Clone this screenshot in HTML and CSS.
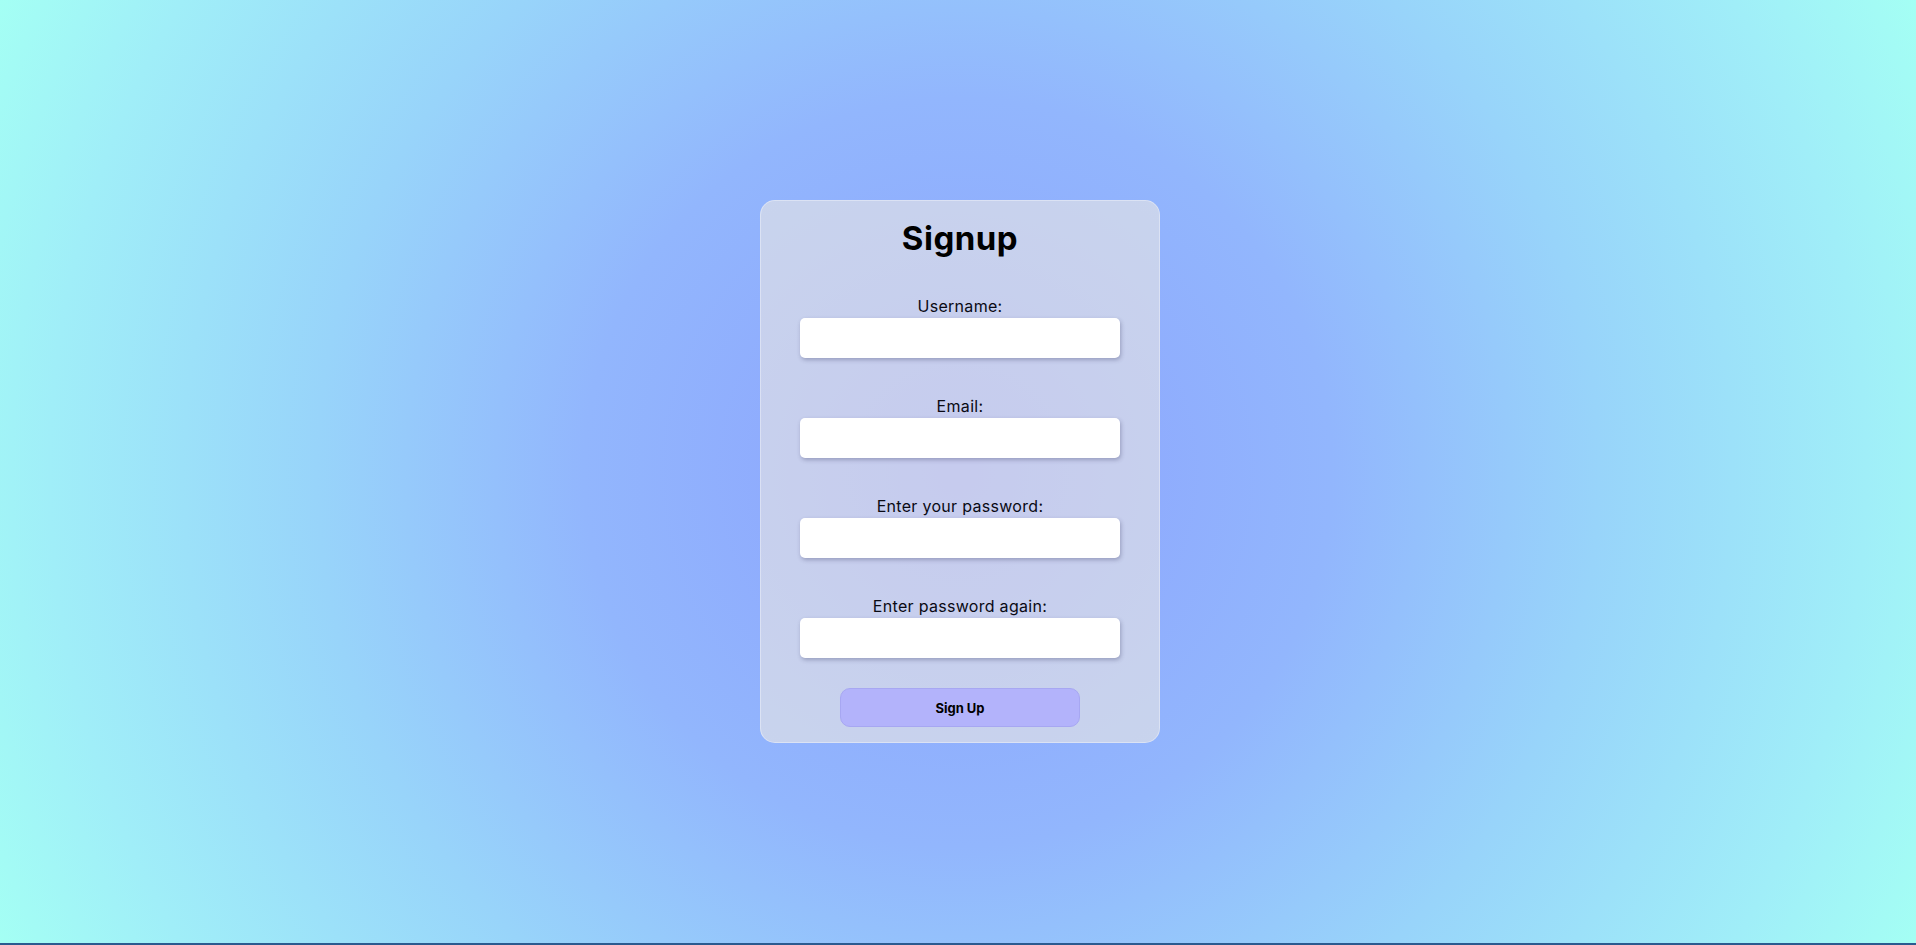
FILE: index.html
```html
<!DOCTYPE html>
<html lang="en">
<head>
<meta charset="utf-8">
<title>Signup</title>
<link rel="stylesheet" href="styles.css">
</head>
<body>
<main class="page">
  <form class="card">
    <h1 class="title">Signup</h1>
    <div class="field">
      <label class="label" for="username">Username:</label>
      <input class="input" id="username" type="text">
    </div>
    <div class="field">
      <label class="label" for="email">Email:</label>
      <input class="input" id="email" type="email">
    </div>
    <div class="field">
      <label class="label" for="pw">Enter your password:</label>
      <input class="input" id="pw" type="password">
    </div>
    <div class="field">
      <label class="label" for="pw2">Enter password again:</label>
      <input class="input" id="pw2" type="password">
    </div>
    <button class="btn" type="button">Sign Up</button>
  </form>
</main>
<div class="bottom-line"></div>
</body>
</html>
```
FILE: styles.css
```css
* { box-sizing: border-box; }
html, body { margin: 0; padding: 0; height: 100%; }
body {
  font-family: Inter, "Noto Sans", sans-serif;
  display: flex;
  flex-direction: column;
  background: radial-gradient(circle farthest-corner at 50% 50%, #8ca2fe 0%, #92b6fd 35%, #98d4fa 60%, #a0eef8 85%, #a4fff4 100%);
}
.page {
  flex: 1;
  display: flex;
  align-items: center;
  justify-content: center;
  padding-left: 4px;
}
.card {
  width: 400px;
  height: 543px;
  padding: 17px 40px 15px;
  background: rgba(255, 244, 222, 0.5);
  border: 1px solid rgba(255, 255, 255, 0.35);
  border-radius: 15px;
  display: flex;
  flex-direction: column;
  align-items: center;
}
.title {
  margin: 0 0 36px;
  font-size: 33px;
  line-height: 40px;
  font-weight: 700;
  color: #000;
  letter-spacing: 0.5px;
}
.field {
  width: 320px;
  display: flex;
  flex-direction: column;
  align-items: center;
  margin-bottom: 36px;
}
.field:last-of-type { margin-bottom: 30px; }
.label {
  font-size: 16px;
  line-height: 24px;
  color: #0a0a14;
  letter-spacing: 0.3px;
}
.input {
  width: 320px;
  height: 40px;
  border: none;
  border-radius: 5px;
  background: #fff;
  box-shadow: 1px 2px 4px rgba(40, 40, 80, 0.3);
  outline: none;
}
.btn {
  width: 240px;
  height: 40px;
  border: 1px solid #a7a7f2;
  border-radius: 10px;
  background: #b3b3fb;
  font-family: Inter, "Noto Sans", sans-serif;
  font-size: 13px;
  font-weight: 700;
  color: #000;
}
.bottom-line {
  height: 2px;
  background: #2b5a8f;
}
```
